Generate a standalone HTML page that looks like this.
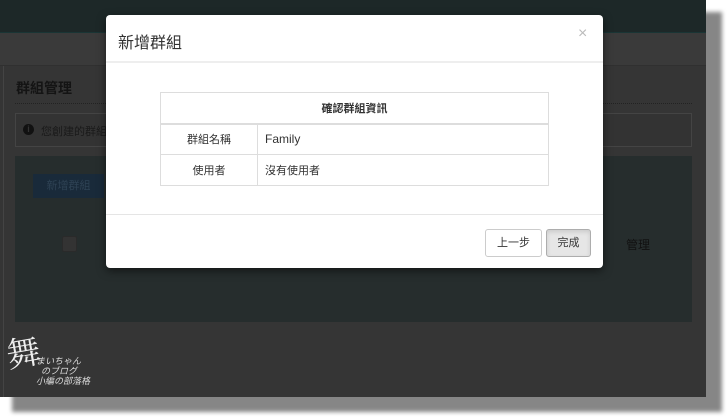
<!DOCTYPE html>
<html><head><meta charset="utf-8"><style>
*{margin:0;padding:0;box-sizing:border-box}
body{width:728px;height:420px;background:#fff;position:relative;overflow:hidden;font-family:"Liberation Sans","Noto Sans CJK TC",sans-serif}
.abs{position:absolute}
</style></head><body>
<div class="abs" style="left:12px;top:12px;width:710px;height:400px;background:#868686;filter:blur(2px)"></div>
<div class="abs" style="left:0;top:0;width:706px;height:397px;background:#353535;overflow:hidden">
  <div class="abs" style="left:0;top:0;width:706px;height:33px;background:#1d2828;border-bottom:1px solid #1a3535"></div>
  <div class="abs" style="left:0;top:33px;width:706px;height:33px;background:#3a3a3a;border-bottom:1px solid #303030"></div>
  <div class="abs" style="left:3px;top:66px;width:1px;height:331px;background:#444"></div>
  <div class="abs" style="left:16px;top:78px;font-size:14px;font-weight:bold;color:#141414">群組管理</div>
  <div class="abs" style="left:15px;top:103px;width:677px;border-top:1px dotted #222"></div>
  <div class="abs" style="left:15px;top:113px;width:677px;height:34px;border:1px solid #444;background:#333"></div>
  <div class="abs" style="left:23px;top:124px;width:11px;height:11px;border-radius:50%;background:#111;color:#333;font-size:9px;text-align:center;line-height:11px;font-weight:bold">i</div>
  <div class="abs" style="left:41px;top:123px;font-size:11px;color:#1a1a1a">您創建的群組</div>
  <div class="abs" style="left:15px;top:156px;width:677px;height:166px;background:#262d2d"></div>
  <div class="abs" style="left:33px;top:174px;width:71px;height:24px;background:#192a3a;color:#2e4254;font-size:11px;line-height:24px;text-align:center">新增群組</div>
  <div class="abs" style="left:62px;top:236px;width:15px;height:16px;background:#333;border:1px solid #2a2a2a;border-radius:2px"></div>
  <div class="abs" style="left:626px;top:236px;font-size:12px;color:#111">管理</div>
  <div class="abs" style="left:6px;top:326px;font-size:34px;color:#eee;font-family:'Noto Serif CJK SC',serif;transform:rotate(-10deg)">舞</div>
  <div class="abs" style="left:36px;top:356px;font-size:9px;color:#ddd;line-height:10px;font-style:italic">まいちゃん<br>&nbsp;&nbsp;のブログ<br>小編の部落格</div>
</div>
<div class="abs" style="left:106px;top:15px;width:497px;height:253px;background:#fff;border-radius:4px;box-shadow:0 3px 9px rgba(0,0,0,.5)">
  <div class="abs" style="left:12px;top:14px;font-size:16px;color:#333">新增群組</div>
  <div class="abs" style="left:472px;top:10px;font-size:16px;color:#bbb">×</div>
  <div class="abs" style="left:0;top:46px;width:497px;border-top:2px solid #eee"></div>
  <table class="abs" style="left:54px;top:77px;width:389px;border-collapse:collapse;font-size:11px;color:#333">
    <tr style="height:31px"><th colspan="2" style="border:1px solid #ddd;border-bottom:2px solid #ddd;font-size:11px;text-align:center">確認群組資訊</th></tr>
    <tr style="height:31px"><td style="border:1px solid #ddd;width:97px;text-align:center">群組名稱</td><td style="border:1px solid #ddd;padding-left:7px;font-size:12px">Family</td></tr>
    <tr style="height:31px"><td style="border:1px solid #ddd;text-align:center">使用者</td><td style="border:1px solid #ddd;padding-left:7px">沒有使用者</td></tr>
  </table>
  <div class="abs" style="left:0;top:199px;width:497px;border-top:1px solid #e5e5e5"></div>
  <div class="abs" style="left:379px;top:214px;width:57px;height:28px;border:1px solid #ccc;border-radius:3px;font-size:11px;color:#333;line-height:26px;text-align:center">上一步</div>
  <div class="abs" style="left:440px;top:214px;width:45px;height:28px;border:1px solid #adadad;border-radius:3px;background:#e6e6e6;box-shadow:inset 0 2px 4px rgba(0,0,0,.12);font-size:11px;color:#333;line-height:26px;text-align:center">完成</div>
</div>
</body></html>
